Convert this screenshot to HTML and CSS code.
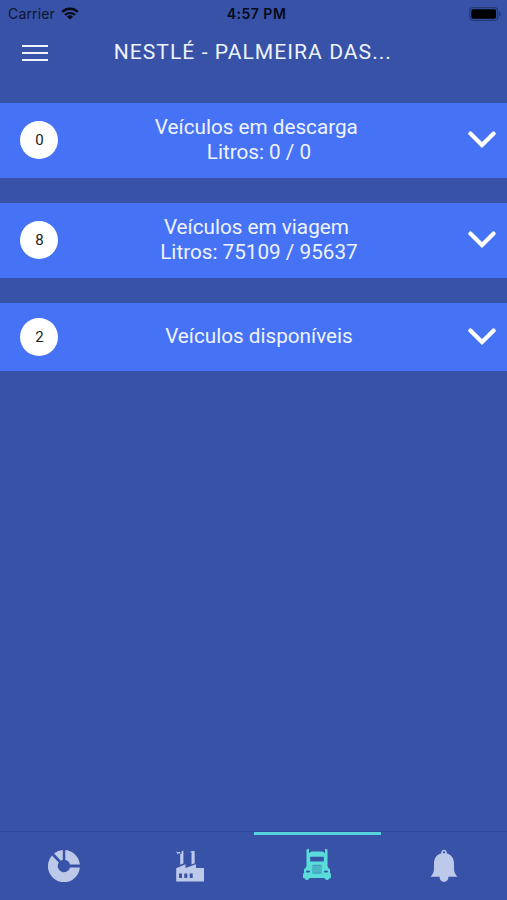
FILE: index.html
```html
<!DOCTYPE html>
<html lang="pt-BR">
<head>
  <meta charset="UTF-8" />
  <meta name="viewport" content="width=device-width, initial-scale=1.0"/>
  <title>Veículos</title>
  <link rel="stylesheet" href="styles.css">
</head>
<body>

  <div class="status-bar">
    <div class="carrier">
      <span>Carrier</span>
      <svg class="wifi" viewBox="0 0 18 13" width="18" height="13">
        <path d="M1.2 4.9a11.2 11.2 0 0 1 15.6 0" fill="none" stroke="#060a18" stroke-width="2.3"/>
        <path d="M4 8a7.2 7.2 0 0 1 10 0" fill="none" stroke="#060a18" stroke-width="2.2"/>
        <path d="M9 12.6 6 9.7a4.3 4.3 0 0 1 6 0z" fill="#060a18"/>
      </svg>
    </div>
    <div class="time">4:57 PM</div>
    <svg class="battery" viewBox="0 0 32 14" width="32" height="14">
      <rect x="0.7" y="0.7" width="28" height="12.6" rx="3.2" fill="none" stroke="#243873" stroke-width="1.2"/>
      <rect x="2.3" y="2.3" width="24.8" height="9.4" rx="1.8" fill="#000"/>
      <path d="M30.1 4.7c2 .7 2 3.9 0 4.6z" fill="#243873"/>
    </svg>
  </div>

  <header class="header">
    <button class="menu" aria-label="Menu"><span></span><span></span><span></span></button>
    <h1>NESTLÉ - PALMEIRA DAS...</h1>
  </header>

  <main class="list">
    <div class="row">
      <span class="count">0</span>
      <div class="label">Veículos em descarga&nbsp;<br>Litros: 0 / 0</div>
      <svg class="chevron" viewBox="0 0 28 18" width="28" height="18"><path d="M2.4 2.6 14 14 25.6 2.6"/></svg>
    </div>
    <div class="row">
      <span class="count">8</span>
      <div class="label">Veículos em viagem&nbsp;<br>Litros: 75109 / 95637</div>
      <svg class="chevron" viewBox="0 0 28 18" width="28" height="18"><path d="M2.4 2.6 14 14 25.6 2.6"/></svg>
    </div>
    <div class="row single">
      <span class="count">2</span>
      <div class="label">Veículos disponíveis</div>
      <svg class="chevron" viewBox="0 0 28 18" width="28" height="18"><path d="M2.4 2.6 14 14 25.6 2.6"/></svg>
    </div>
  </main>

  <nav class="tabs">
    <a class="tab">
      <svg viewBox="0 0 32 32" width="32" height="32">
        <path d="M17.3 0.1A16 16 0 0 1 31.9 14.5H22A6.2 6.2 0 0 0 17.3 10z"/>
        <path d="M14.8 0.1V10a6 6 0 0 0-1.9.8L6 3.6A16 16 0 0 1 14.8 0.1z"/>
        <path d="M4 5.6 10.8 12.6A6.2 6.2 0 1 0 22 17.4H31.9A16 16 0 1 1 4 5.6z"/>
      </svg>
    </a>
    <a class="tab">
      <svg viewBox="1 0 32 32" width="32" height="32">
        <path fill-rule="evenodd" d="M2.2 31.5V18.2L11.5 14.3V18L22 14.3V18H30V31.5zM5 23.6V28H8V23.6zM10.3 23.6V28H13.3V23.6zM15.7 23.6V28H18.7V23.6z"/>
        <path d="M6.2 3.8H9.4V13.5L6.2 14.8zM17.5 3.8H20.7V13.2L17.5 14.4z"/>
        <path d="M2 1.2 4 2.2 6 1.8 6.4 3.6 4.6 3.2 3.8 4.4zM7.6 1.3 9.4.6V4L7.5 4zM16 1.4 17.8 1.6 19 .8 20.6 1.2V4L18.4 4 17.8 3.6z"/>
      </svg>
    </a>
    <a class="tab active">
      <svg viewBox="0 0 32 34" width="32" height="34">
        <path fill-rule="evenodd" d="M5.5 1.5 8 .8V5L10.5 3.6H21.5L24 5V.8L26.5 1.5V18L27.5 20.2 29 21V25L30 26V30H28.7A2.8 2.8 0 0 1 23.4 30H8.6A2.8 2.8 0 0 1 3.3 30H2V26L3 25V21L4.5 20.2 5.5 18zM9.2 8.8V13.4H22.8V8.8zM4.8 23.7C5.8 22.2 8.4 22.2 9.2 23.7 8 24.9 6 24.9 4.8 23.7zM22.8 23.7C23.6 22.2 26.2 22.2 27.2 23.7 26 24.9 24 24.9 22.8 23.7z"/>
        <path class="grille" d="M12 17.8V24.7M14 17.8V24.7M16 17.8V24.7M18 17.8V24.7M20 17.8V24.7M11.5 17.3H20.5M11.5 25.1H20.5"/>
      </svg>
    </a>
    <a class="tab">
      <svg viewBox="0 0 32 34" width="32" height="34">
        <path fill-rule="evenodd" d="M16 .8A2.8 2.8 0 0 1 18.7 4.3C23.5 5.7 26 9.8 26 14.5V20C26 23.2 27.2 25.2 29.5 27.8H20.4V28.5A4.4 4.4 0 0 1 11.6 28.5V27.8H2.5C4.8 25.2 6 23.2 6 20V14.5C6 9.8 8.5 5.7 13.3 4.3A2.8 2.8 0 0 1 16 .8zM16 2.2A1.1 1.1 0 1 0 16 4.4 1.1 1.1 0 1 0 16 2.2z"/>
      </svg>
    </a>
  </nav>

</body>
</html>
```
FILE: styles.css
```css
* {
  box-sizing: border-box;
}
body {
  margin: 0;
  height: 900px;
  display: flex;
  flex-direction: column;
  overflow: hidden;
  background: #3752a7;
  color: #eef3ff;
  font-family: Roboto, sans-serif;
}
.status-bar {
  height: 27px;
  padding: 0 6px 0 8px;
  display: grid;
  grid-template-columns: 1fr auto 1fr;
  align-items: center;
  font-family: Inter, sans-serif;
  font-size: 14px;
  color: #0c1530;
}
.carrier {
  display: flex;
  align-items: center;
  gap: 6px;
  letter-spacing: 0.15px;
}
.time {
  padding-left: 4px;
  font-weight: 600;
  letter-spacing: 0.5px;
  color: #060a18;
}
.battery {
  justify-self: end;
}
.header {
  height: 75.5px;
  padding: 9px 22px 0;
  display: flex;
  align-items: flex-start;
}
.menu {
  width: 26px;
  height: 34px;
  padding: 0;
  border: none;
  background: none;
  display: flex;
  flex-direction: column;
  justify-content: center;
  gap: 5px;
}
.menu span {
  height: 2px;
  background: #eef3ff;
}
.header h1 {
  margin: 0 0 0 65.7px;
  font-size: 21.1px;
  font-weight: 400;
  line-height: 32px;
  letter-spacing: 1.03px;
  white-space: nowrap;
}
.list {
  flex: 1;
  display: flex;
  flex-direction: column;
  gap: 24.4px;
}
.row {
  height: 75.7px;
  padding: 0 11px 0 20px;
  display: flex;
  align-items: center;
  background: #4672f6;
}
.single {
  height: 68.5px;
}
.count {
  width: 38px;
  height: 38px;
  margin-left: 0.4px;
  border-radius: 50%;
  background: #fff;
  color: #222;
  font-size: 15px;
  line-height: 38px;
  text-align: center;
}
.label {
  flex: 1;
  padding: 0 8.5px 1.6px 0;
  font-size: 20.7px;
  line-height: 24.4px;
  text-align: center;
}
.chevron path {
  fill: none;
  stroke: #fff;
  stroke-width: 4.2;
  stroke-linecap: round;
}
.tabs {
  height: 69px;
  padding-left: 1px;
  display: flex;
  border-top: 1px solid #2f4998;
}
.tab {
  flex: 1;
  display: flex;
  justify-content: center;
  align-items: center;
  fill: #bdc9e8;
}
.active {
  border-top: 3px solid #56d3dc;
  padding-bottom: 5px;
  fill: #5addd9;
}
.grille {
  fill: none;
  stroke: #3b8fb6;
  stroke-width: 1;
}
```
